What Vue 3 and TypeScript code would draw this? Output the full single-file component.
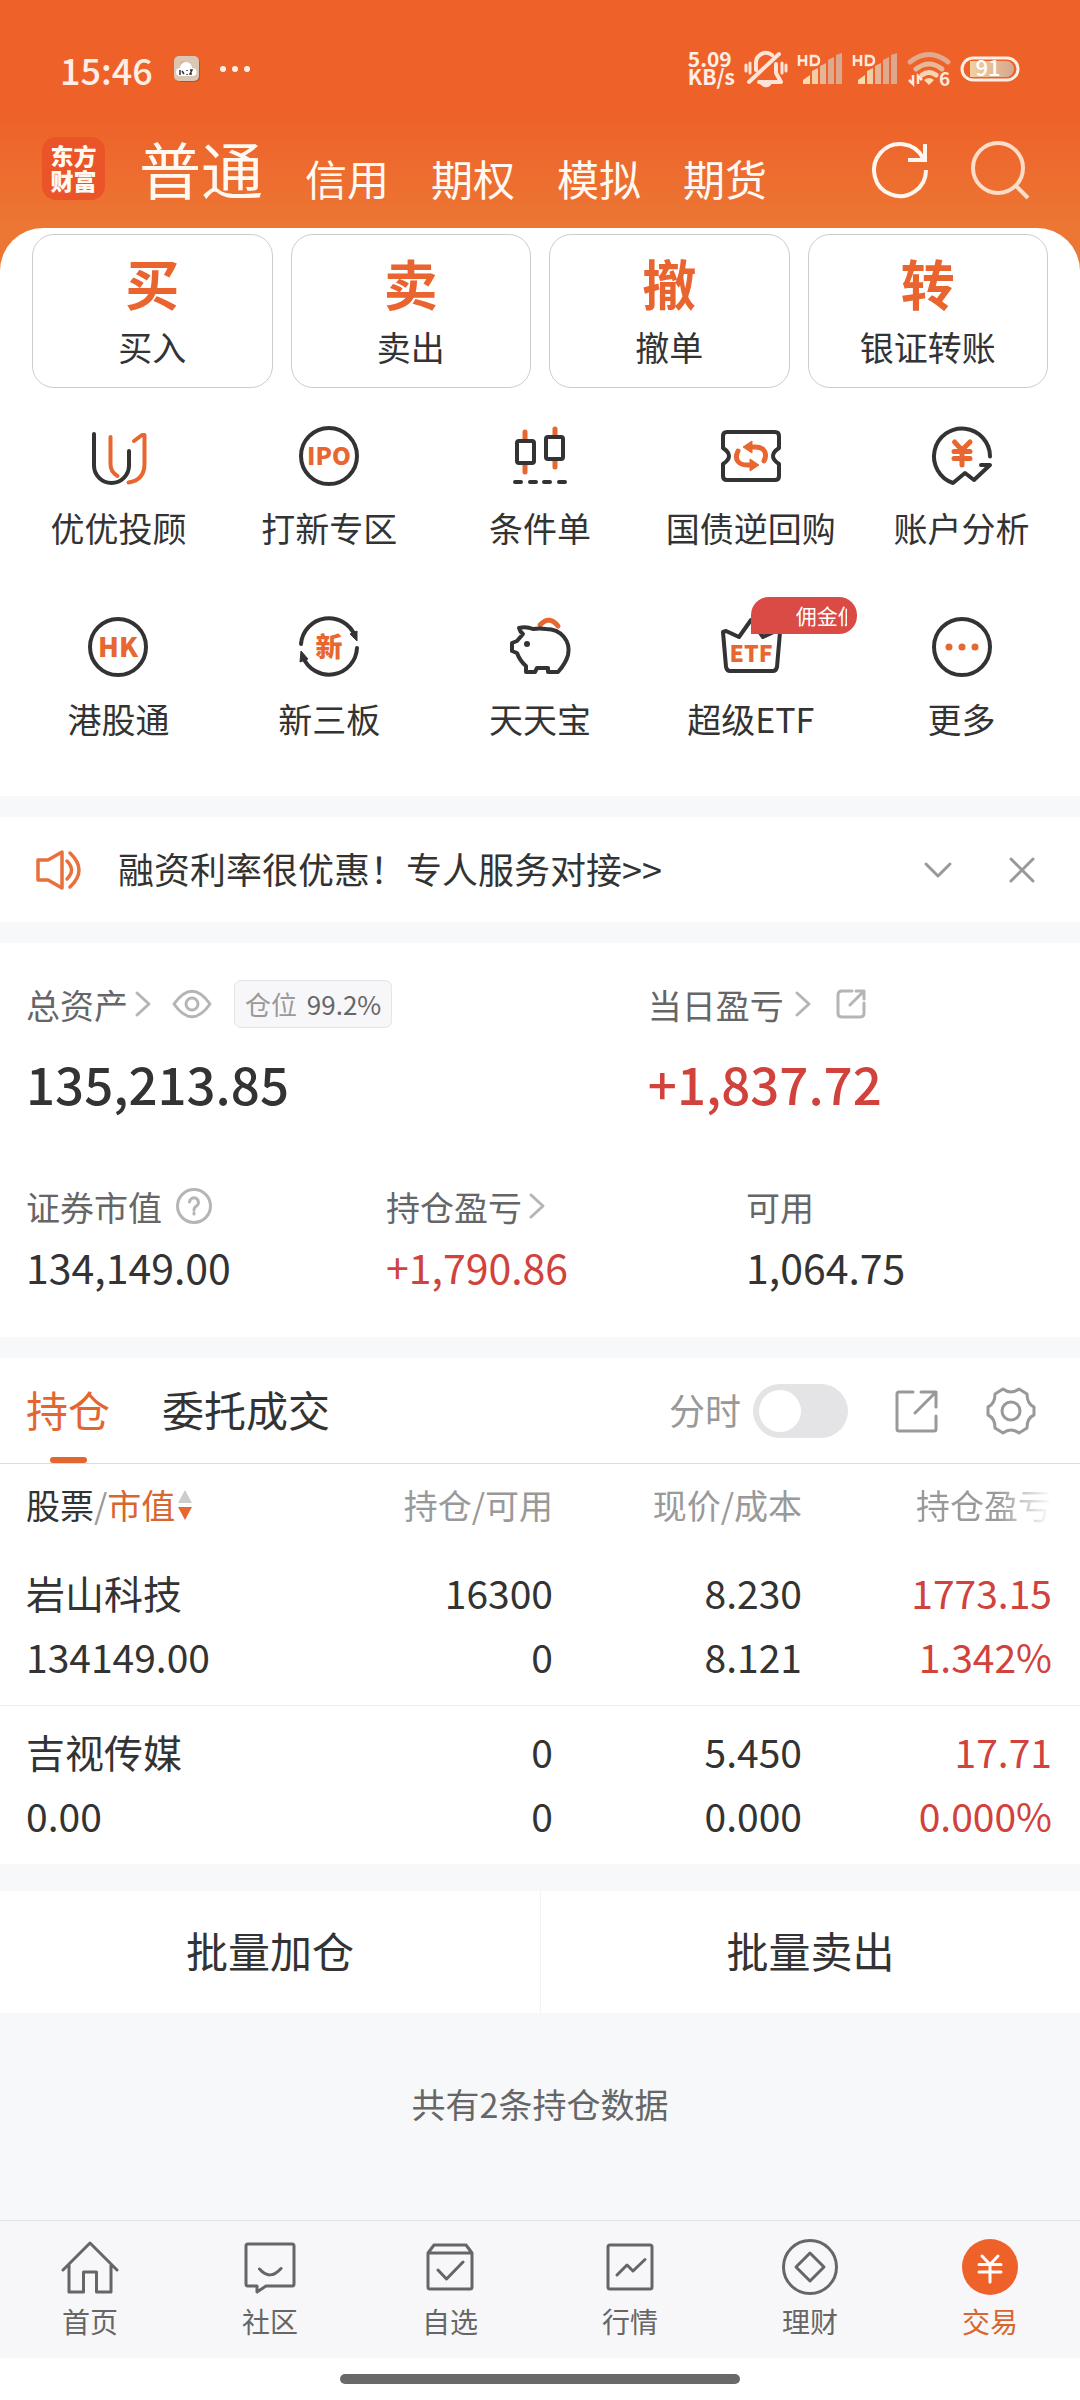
<script setup lang="ts">
import { ref } from 'vue'

interface Holding {
  name: string
  value: string
  held: string
  usable: string
  price: string
  cost: string
  profit: string
  rate: string
}

const accounts: string[] = ['普通', '信用', '期权', '模拟', '期货']
const account = ref('普通')

const trades = [
  { mark: '买', label: '买入' },
  { mark: '卖', label: '卖出' },
  { mark: '撤', label: '撤单' },
  { mark: '转', label: '银证转账' },
]

const services = [
  { id: 'adviser', label: '优优投顾' },
  { id: 'ipo', label: '打新专区' },
  { id: 'candle', label: '条件单' },
  { id: 'repo', label: '国债逆回购' },
  { id: 'analysis', label: '账户分析' },
  { id: 'hk', label: '港股通' },
  { id: 'neeq', label: '新三板' },
  { id: 'pig', label: '天天宝' },
  { id: 'etf', label: '超级ETF', badge: '佣金低至' },
  { id: 'more', label: '更多' },
]

const holdings: Holding[] = [
  { name: '岩山科技', value: '134149.00', held: '16300', usable: '0', price: '8.230', cost: '8.121', profit: '1773.15', rate: '1.342%' },
  { name: '吉视传媒', value: '0.00', held: '0', usable: '0', price: '5.450', cost: '0.000', profit: '17.71', rate: '0.000%' },
]

const tabs = [
  { id: 'home', label: '首页' },
  { id: 'chat', label: '社区' },
  { id: 'watch', label: '自选' },
  { id: 'market', label: '行情' },
  { id: 'wealth', label: '理财' },
  { id: 'trade', label: '交易' },
]
const tab = ref('trade')
const timeline = ref(false)
const noticeOpen = ref(true)
</script>

<template>
  <div class="app">
    <div class="top">
      <div class="status">
        <span class="time">15:46</span>
        <svg class="weather" width="28" height="28" viewBox="0 0 28 28">
          <rect x="3" y="3" width="24" height="24" rx="5" fill="#b5502a" />
          <rect x="1" y="1" width="25" height="25" rx="5" fill="#d9c7b4" />
          <circle cx="10" cy="9" r="3" fill="#e3ae92" />
          <path d="M7 21a4 4 0 0 1 0-8 6 6 0 0 1 12 0 4 4 0 0 1 1 8z" fill="#fff" />
          <path d="M7 15v5M9 16l2 3M14 15v1M14 19v1M17 15h2l-2 4h2" stroke="#333" stroke-width="1.5" fill="none" />
        </svg>
        <svg width="32" height="8" viewBox="0 0 32 8" fill="#fdeee6">
          <circle cx="4" cy="4" r="3" /><circle cx="16" cy="4" r="3" /><circle cx="28" cy="4" r="3" />
        </svg>
        <div class="sys">
          <div class="speed">5.09<br />KB/s</div>
          <svg width="44" height="38" viewBox="0 0 44 38" fill="none" stroke="#fde4d6" stroke-width="3" stroke-linecap="round">
            <path d="M5 32 35 4M12 20V14A10 10 0 0 1 28 5M32 14v9l5 9H15" stroke-width="4" stroke-linejoin="round" />
            <path d="M17 34.500h10q-5 5-10 0z" stroke-width="1" fill="#fde4d6" />
            <path d="M2 15v6M6 13v10M38 13v10M42 15v6" />
          </svg>
          <svg v-for="n in 2" :key="n" class="signal" width="46" height="34" viewBox="0 0 46 34">
            <g fill="none" stroke="#fde9dd" stroke-width="2.500">
              <path d="M2 3v11M9 3v11M2 8.500h7M14 4v9h3q5 0 5-4.500T17 4z" />
            </g>
            <path d="M6 32v-4l7-5v9z" fill="#fbdcb0" />
            <path d="M15 32V19l6-3v16z" fill="#f3cda4" />
            <path d="M23 32V14l6-3v21z" fill="#e6b496" />
            <path d="M31 32V8l6-3v27z" fill="#dfa98f" />
            <path d="M39 32V3l6-2v31z" fill="#dca78f" />
          </svg>
          <svg width="44" height="36" viewBox="0 0 44 36">
            <g fill="none" stroke-width="5" stroke-linecap="round">
              <path d="M3 11q19-15 38 0" stroke="#e2a98d" />
              <path d="M9 18q13-10 26 0" stroke="#e9b898" />
              <path d="M15 24q7-5 14 0" stroke="#f6d4b4" />
            </g>
            <path d="M17 29q5-4 10 0l-5 5z" fill="#fbdcb0" />
            <path d="M6 24v9l-4-4M11 33v-8l4 4" stroke="#fde9dd" stroke-width="2.500" fill="none" />
            <text x="32" y="35" font-size="19" font-weight="700" fill="#fde9dd">6</text>
          </svg>
          <svg class="battery" width="60" height="28" viewBox="0 0 60 28">
            <defs>
              <linearGradient id="charge"><stop offset="0" stop-color="#f3cf9f" /><stop offset="1" stop-color="#d5a88f" /></linearGradient>
            </defs>
            <rect x="2" y="3" width="56" height="22" rx="11" fill="none" stroke="#fdeee6" stroke-width="3" />
            <path d="M10 6H46a8 8 0 0 1 0 16H10z" fill="url(#charge)" />
            <text x="28" y="21" font-size="22" text-anchor="middle" font-weight="500" fill="#fff">91</text>
          </svg>
        </div>
      </div>

      <header class="nav">
        <div class="logo">东方<br />财富</div>
        <nav class="accounts">
          <button v-for="a in accounts" :key="a" :class="{ on: a === account }" @click="account = a">{{ a }}</button>
        </nav>
        <button class="tool" aria-label="刷新">
          <svg width="60" height="60" viewBox="0 0 60 60" fill="none" stroke="#fff6ef" stroke-width="4">
            <path d="M56 30A26 26 0 1 1 53 18" /><path d="M55 4V20H38" />
          </svg>
        </button>
        <button class="tool" aria-label="搜索">
          <svg width="60" height="60" viewBox="0 0 60 60" fill="none" stroke="#fddcc8" stroke-width="4">
            <circle cx="28" cy="28" r="25" /><path d="M45 45 58 58" />
          </svg>
        </button>
      </header>

      <section class="panel">
        <div class="trades">
          <button v-for="t in trades" :key="t.label">
            <strong>{{ t.mark }}</strong>
            <span>{{ t.label }}</span>
          </button>
        </div>
        <div class="services">
          <a v-for="s in services" :key="s.id" href="#">
            <svg class="glyph" width="60" height="60" viewBox="0 0 60 60">
              <template v-if="s.id === 'adviser'">
                <path class="dark" d="M6 8V39.500a17.500 17.500 0 0 0 35 0V25" />
                <path class="warm" d="M22.500 11V38q0 8 7 12M46 15l8-6h2.500V38q0 16-16 18.500" />
              </template>
              <template v-else-if="s.id === 'ipo'">
                <circle class="dark" cx="30" cy="30" r="28" />
                <text x="30" y="39" font-size="24">IPO</text>
              </template>
              <template v-else-if="s.id === 'candle'">
                <path class="warm thick" d="M15 6v8M15 39v7M45 3v7M45 34v7" />
                <rect class="dark" x="7" y="15" width="17" height="22" rx="2" />
                <rect class="dark" x="36" y="11" width="17" height="22" rx="2" />
                <path class="dark" d="M5 56h6M20 56h6M34 56h6M49 56h6" />
              </template>
              <template v-else-if="s.id === 'repo'">
                <path class="dark" d="M6 6H54q4 0 4 4V22q-6 4-6 8t6 8V50q0 4-4 4H6q-4 0-4-4V38q6-4 6-8T2 22V10q0-4 4-4z" />
                <path class="warm thick" d="M43 35C47 27 43 21 34 21H29M17 25C13 33 17 39 26 39H31" />
                <path d="M31 15v12l-9-6zM29 33v12l9-6z" fill="#e8662f" stroke="#e8662f" stroke-linejoin="round" />
              </template>
              <template v-else-if="s.id === 'analysis'">
                <path class="dark" d="M58 30.500A28 28 0 1 0 21 57L33 47 42 54 58 39H49" />
                <path class="warm thick" d="M22.500 16 30 24 38 16M22 25.500H38M22 32.500H38M30 25V39" />
              </template>
              <template v-else-if="s.id === 'hk'">
                <circle class="dark" cx="30" cy="30" r="28" />
                <text x="30" y="40" font-size="27">HK</text>
              </template>
              <template v-else-if="s.id === 'neeq'">
                <path class="dark" d="M2 27A28 28 0 0 1 56 19M58 31A28 28 0 0 1 4 40" />
                <path d="M51 17l7-3v10zM1 45l1-11 7 8z" fill="#333" stroke="#333" stroke-linejoin="round" />
                <text x="30" y="40" font-size="27">新</text>
              </template>
              <template v-else-if="s.id === 'pig'">
                <path class="warm thick" d="M30 8Q39-2 48 9" />
                <path class="dark" d="M9 11q7-2 14 1 7-1 13 0c15 0 25 12 22 26q-2 8-10 17H38V51H27l-2 4H16V49q-6-5-9-13l-5-2V26l5-2 6-7q-3-2-4-6z" />
                <circle cx="17" cy="27" r="3" fill="#333" />
              </template>
              <template v-else-if="s.id === 'etf'">
                <path class="dark" d="M2 15l3-1 13 6L30 3 42 20l13-6 4 1L56 50q-1 4-4 4H9q-3 0-4-4z" />
                <text x="30" y="45" font-size="23">ETF</text>
              </template>
              <template v-else>
                <circle class="dark" cx="30" cy="30" r="28" />
                <g fill="#e8662f"><circle cx="17" cy="30" r="3.500" /><circle cx="30" cy="30" r="3.500" /><circle cx="43" cy="30" r="3.500" /></g>
              </template>
            </svg>
            <span>{{ s.label }}</span>
            <em v-if="s.badge"><i>{{ s.badge }}</i></em>
          </a>
        </div>
      </section>
    </div>

    <section v-if="noticeOpen" class="notice">
      <svg width="46" height="40" viewBox="0 0 46 40" fill="none" stroke="#e8703d" stroke-width="3.500" stroke-linecap="round" stroke-linejoin="round">
        <path d="M2 10H12L26 2V38L12 30H2zM31 11q9 9 0 18M34 3q18 17 0 34" />
      </svg>
      <p>融资利率很优惠！专人服务对接&gt;&gt;</p>
      <button aria-label="展开">
        <svg width="28" height="28" viewBox="0 0 28 28" class="thin"><path d="M2 8 14 20 26 8" /></svg>
      </button>
      <button aria-label="关闭" @click="noticeOpen = false">
        <svg width="28" height="28" viewBox="0 0 28 28" class="thin"><path d="M3 3 25 25M25 3 3 25" /></svg>
      </button>
    </section>

    <section class="assets">
      <div class="main">
        <div>
          <div class="label">
            <a href="#">总资产</a>
            <svg class="arrow" width="18" height="26" viewBox="0 0 18 26"><path d="M3 2 15 13 3 24" /></svg>
            <svg class="eye" width="40" height="28" viewBox="0 0 40 28"><path d="M2 14C14-3 26-3 38 14 26 31 14 31 2 14z" /><circle cx="20" cy="14" r="6" /></svg>
            <span class="ratio">仓位 <b>99.2%</b></span>
          </div>
          <div class="big">135,213.85</div>
        </div>
        <div>
          <div class="label">
            <a href="#">当日盈亏</a>
            <svg class="arrow wide" width="18" height="26" viewBox="0 0 18 26"><path d="M3 2 15 13 3 24" /></svg>
            <svg class="share" width="30" height="30" viewBox="0 0 30 30"><path d="M16 2H6Q2 2 2 6V24Q2 28 6 28H24Q28 28 28 24V14M20 2H28V10M28 2 14 16" /></svg>
          </div>
          <div class="big up">+1,837.72</div>
        </div>
      </div>
      <div class="sub">
        <div>
          <div class="label">
            证券市值
            <svg class="help" width="36" height="36" viewBox="0 0 36 36"><circle cx="18" cy="18" r="16.500" /><path d="M13.500 14a4.500 4.500 0 1 1 7 4q-2.500 1.500-2.500 4M18 25v1" /></svg>
          </div>
          <div class="mid">134,149.00</div>
        </div>
        <div>
          <div class="label">
            <a href="#">持仓盈亏</a>
            <svg class="arrow" width="18" height="26" viewBox="0 0 18 26"><path d="M3 2 15 13 3 24" /></svg>
          </div>
          <div class="mid up">+1,790.86</div>
        </div>
        <div>
          <div class="label">可用</div>
          <div class="mid">1,064.75</div>
        </div>
      </div>
    </section>

    <section class="holdings">
      <div class="bar">
        <button class="tab on">持仓</button>
        <button class="tab">委托成交</button>
        <label for="timeline">分时</label>
        <input id="timeline" v-model="timeline" type="checkbox" />
        <button class="act" aria-label="分享">
          <svg width="44" height="44" viewBox="0 0 44 44" class="thin"><path d="M18 3H4Q2 3 2 5V40Q2 42 4 42H39Q41 42 41 40V27M26 3H41V18M41 3 20 24" /></svg>
        </button>
        <button class="act" aria-label="设置">
          <svg width="50" height="48" viewBox="-1 0 50 48" class="thin"><path d="M16 2Q24 8 32 2L40 7Q40 17 47 20V28Q40 31 40 41L32 46Q24 40 16 46L8 41Q8 31 1 28V20Q8 17 8 7Z" /><circle cx="24" cy="24" r="9" /></svg>
        </button>
      </div>
      <table>
        <colgroup><col /><col class="c2" /><col class="c3" /><col class="c4" /></colgroup>
        <thead>
          <tr>
            <th>
              <div class="sort">
                <b>股票</b>/<span>市值</span>
                <svg width="16" height="32" viewBox="0 0 16 32"><path d="M8 1l7 13H1z" fill="#ccc" /><path d="M8 31 1 18h14z" fill="#e8662f" /></svg>
              </div>
            </th>
            <th>持仓/可用</th>
            <th>现价/成本</th>
            <th><span class="fade">持仓盈亏</span></th>
          </tr>
        </thead>
        <tbody>
          <tr v-for="h in holdings" :key="h.name">
            <td><span>{{ h.name }}</span><span>{{ h.value }}</span></td>
            <td><span>{{ h.held }}</span><span>{{ h.usable }}</span></td>
            <td><span>{{ h.price }}</span><span>{{ h.cost }}</span></td>
            <td class="up"><span>{{ h.profit }}</span><span>{{ h.rate }}</span></td>
          </tr>
        </tbody>
      </table>
    </section>

    <div class="batch">
      <button>批量加仓</button>
      <button>批量卖出</button>
    </div>

    <p class="total">共有2条持仓数据</p>

    <nav class="tabs">
      <a v-for="t in tabs" :key="t.id" href="#" :class="{ on: t.id === tab }" @click.prevent="tab = t.id">
        <svg width="56" height="56" viewBox="0 0 56 56">
          <template v-if="t.id === 'home'">
            <path d="M1 31 28 4 55 31M7 26V53H21.500V33H34.500V53H49V26" />
          </template>
          <template v-else-if="t.id === 'chat'">
            <path d="M6 5H50Q52 5 52 7V45Q52 47 50 47H24L15 53V47H6Q4 47 4 45V7Q4 5 6 5zM17.500 30Q28 42 39 29.500" />
          </template>
          <template v-else-if="t.id === 'watch'">
            <path d="M6 14 12 6H44L50 14V48Q50 50 48 50H8Q6 50 6 48zH50M16 31 24.500 40 41 23" />
          </template>
          <template v-else-if="t.id === 'market'">
            <rect x="6" y="6" width="44" height="44" rx="2" /><path d="M15 36 25 26 31 32 43 20.500" />
          </template>
          <template v-else-if="t.id === 'wealth'">
            <circle cx="28" cy="28" r="26.500" /><path d="M28 14 42 28 28 42 14 28z" />
          </template>
          <template v-else>
            <circle cx="28" cy="28" r="28" fill="#ee622a" stroke="none" />
            <path d="M20 17 28 25.500 36 17M17 25.500H39M17 33H39M28 25.500V43" stroke="#fff" />
          </template>
        </svg>
        <span>{{ t.label }}</span>
      </a>
    </nav>
    <div class="gesture"><div></div></div>
  </div>
</template>

<style>
body {
  background: #fff;
}
</style>

<style scoped>
.app {
  display: flex;
  flex-direction: column;
  min-height: 100vh;
  background: #f7f8fa;
  color: #333;
  font-family: "Noto Sans CJK SC", "Noto Sans", sans-serif;
}
button {
  padding: 0;
  border: 0;
  background: none;
  color: inherit;
  font: inherit;
}
a {
  color: inherit;
  text-decoration: none;
}
p {
  margin: 0;
}
svg {
  flex: none;
  display: block;
  overflow: visible;
}
em,
i {
  font-style: normal;
}
.up {
  color: #d0423b;
}
.thin {
  fill: none;
  stroke: #999;
  stroke-width: 3;
  stroke-linecap: round;
  stroke-linejoin: round;
}

/* status bar and account switcher */
.top {
  background: linear-gradient(#ee622a 120px, #ec7734 228px);
}
.status {
  display: flex;
  align-items: center;
  height: 60px;
  padding: 39px 60px 1px;
  color: #fdeee6;
}
.time {
  font-size: 36px;
  font-weight: 500;
}
.weather {
  margin: 0 18px 0 20px;
}
.sys {
  display: flex;
  align-items: center;
  gap: 9px;
  margin-left: auto;
}
.speed {
  padding-bottom: 4px;
  font-size: 21px;
  font-weight: 700;
  line-height: 18px;
}
.nav {
  display: flex;
  align-items: center;
  height: 128px;
  padding: 0 50px 0 42px;
  color: #fff9f2;
}
.logo {
  width: 63px;
  height: 57px;
  margin-top: 8px;
  padding-top: 6px;
  border-radius: 14px;
  background: #ea5428;
  font-size: 23px;
  font-weight: 900;
  line-height: 25px;
  text-align: center;
}
.accounts {
  display: flex;
  align-items: flex-end;
  gap: 42px;
  margin: 8px auto 0 34px;
  font-size: 42px;
  line-height: 42px;
}
.accounts .on {
  font-size: 62px;
  line-height: 62px;
}
.tool {
  margin-top: 12px;
  margin-left: 40px;
}

/* trading shortcuts */
.panel {
  padding: 6px 0 55px;
  border-radius: 43px 43px 0 0;
  background: #fff;
}
.trades {
  display: grid;
  grid-template-columns: repeat(4, 1fr);
  gap: 18px;
  padding: 0 32px;
}
.trades button {
  display: flex;
  flex-direction: column;
  align-items: center;
  gap: 12px;
  height: 154px;
  padding-top: 18px;
  border: 1px solid #ccc;
  border-radius: 22px;
  font-size: 34px;
  line-height: 44px;
}
.trades strong {
  color: #ea6430;
  font-size: 54px;
  line-height: 60px;
}
.services {
  display: grid;
  grid-template-columns: repeat(5, 1fr);
  row-gap: 67px;
  padding: 38px 13px 0;
}
.services a {
  position: relative;
  display: flex;
  flex-direction: column;
  align-items: center;
  gap: 20px;
  font-size: 34px;
  line-height: 44px;
  white-space: nowrap;
}
.glyph .dark,
.glyph .warm {
  fill: none;
  stroke: #333;
  stroke-width: 4;
  stroke-linecap: round;
  stroke-linejoin: round;
}
.glyph .warm {
  stroke: #e8662f;
}
.glyph .thick {
  stroke-width: 5;
}
.glyph text {
  fill: #e8662f;
  font-weight: 900;
  text-anchor: middle;
}
.services em {
  position: absolute;
  left: 50%;
  top: -20px;
  width: 106px;
  height: 37px;
  padding: 0 10px 0 45px;
  box-sizing: border-box;
  border-radius: 18px 18px 18px 0;
  background: #da4b45;
  color: #fff;
  font-size: 21px;
  line-height: 36px;
}
.services i {
  display: block;
  overflow: hidden;
}

/* announcement */
.notice {
  display: flex;
  align-items: center;
  height: 105px;
  margin: 21px 0;
  padding: 0 44px 0 36px;
  background: #fff;
  font-size: 36px;
}
.notice p {
  margin: 0 auto 0 36px;
  padding-bottom: 4px;
}
.notice button {
  margin-left: 56px;
}

/* asset summary */
.assets {
  padding: 38px 0 42px;
  background: #fff;
}
.main {
  display: grid;
  grid-template-columns: 59fr 41fr;
  padding-left: 26px;
}
.sub {
  display: grid;
  grid-template-columns: repeat(3, 1fr);
  margin-top: 68px;
}
.sub > div {
  padding-left: 26px;
}
.label {
  display: flex;
  align-items: center;
  height: 46px;
  padding-bottom: 2px;
  color: #666;
  font-size: 34px;
}
.label svg {
  fill: none;
  stroke: #b5b5b5;
  stroke-width: 3;
  stroke-linecap: round;
  stroke-linejoin: round;
}
.arrow {
  margin-left: 6px;
}
.arrow.wide {
  margin-left: 10px;
}
.eye {
  margin: 0 22px 0 20px;
}
.share {
  margin-left: 24px;
}
.help {
  margin-left: 14px;
}
.ratio {
  padding: 0 10px;
  border: 1px solid #e3e4e8;
  border-radius: 7px;
  background: #f7f7fa;
  color: #999;
  font-size: 26px;
  line-height: 46px;
}
.ratio b {
  margin-left: 4px;
  color: #666;
  font-weight: 400;
}
.big {
  margin-top: 22px;
  font-size: 51px;
  font-weight: 500;
  line-height: 64px;
}
.mid {
  margin-top: 9px;
  padding-bottom: 3px;
  font-size: 41px;
  line-height: 52px;
}

/* holdings */
.holdings {
  margin-top: 21px;
  background: #fff;
}
.bar {
  display: flex;
  align-items: center;
  height: 105px;
  padding: 0 44px 0 26px;
  border-bottom: 1px solid #ddd;
}
.tab {
  padding-bottom: 4px;
  font-size: 42px;
}
.tab.on {
  position: relative;
  margin-right: 52px;
  color: #e2662f;
}
.tab.on::after {
  content: "";
  position: absolute;
  left: 24px;
  right: 23px;
  bottom: -20px;
  height: 6px;
  border-radius: 3px;
  background: #e2662f;
}
.bar label {
  margin-left: auto;
  padding-bottom: 4px;
  color: #999;
  font-size: 36px;
}
.bar input {
  appearance: none;
  width: 95px;
  height: 54px;
  margin: 0 0 0 12px;
  padding: 6px;
  border-radius: 27px;
  background: #e4e4e7;
}
.bar input::before {
  content: "";
  display: block;
  width: 42px;
  height: 42px;
  border-radius: 50%;
  background: #fff;
}
.bar input:checked::before {
  margin-left: auto;
}
.act {
  margin-left: 47px;
}
table {
  width: 100%;
  table-layout: fixed;
  border-collapse: collapse;
}
.c2 {
  width: 253px;
}
.c3 {
  width: 249px;
}
.c4 {
  width: 278px;
}
th {
  height: 81px;
  padding: 0 0 2px;
  color: #999;
  font-size: 34px;
  font-weight: 400;
  text-align: right;
}
.sort {
  display: flex;
  align-items: center;
}
.sort b {
  color: #333;
  font-weight: 400;
}
.sort span {
  margin-right: 2px;
  color: #d9652f;
}
th:first-child,
td:first-child {
  padding-left: 26px;
  text-align: left;
}
th:last-child,
td:last-child {
  padding-right: 28px;
}
.fade {
  background: linear-gradient(90deg, #999 60%, #fff 100%);
  background-clip: text;
  color: transparent;
}
td {
  padding: 13px 0 17px;
  font-size: 39px;
  line-height: 64px;
  text-align: right;
}
td span {
  display: block;
}
tbody tr + tr {
  border-top: 1px solid #ececef;
}

/* batch actions */
.batch {
  display: grid;
  grid-template-columns: 1fr 1fr;
  height: 122px;
  margin-top: 27px;
  background: #fff;
  font-size: 42px;
}
.batch button {
  padding-bottom: 6px;
}
.batch button + button {
  border-left: 1px solid #f2f2f4;
}
.total {
  flex: 1;
  padding-top: 66px;
  color: #666;
  font-size: 34px;
  text-align: center;
}

/* bottom navigation */
.tabs {
  display: grid;
  grid-template-columns: repeat(6, 1fr);
  height: 137px;
  border-top: 1px solid #e1e3e6;
  background: #f7f7fa;
}
.tabs a {
  display: flex;
  flex-direction: column;
  align-items: center;
  gap: 8px;
  padding-top: 18px;
  color: #666;
  font-size: 28px;
  line-height: 36px;
}
.tabs svg {
  fill: none;
  stroke: #666;
  stroke-width: 3;
  stroke-linecap: round;
  stroke-linejoin: round;
}
.tabs .on {
  color: #d9652f;
}
.gesture {
  display: flex;
  justify-content: center;
  padding: 16px 0;
  background: #fff;
}
.gesture div {
  width: 37%;
  height: 10px;
  border-radius: 5px;
  background: #696969;
}
</style>
